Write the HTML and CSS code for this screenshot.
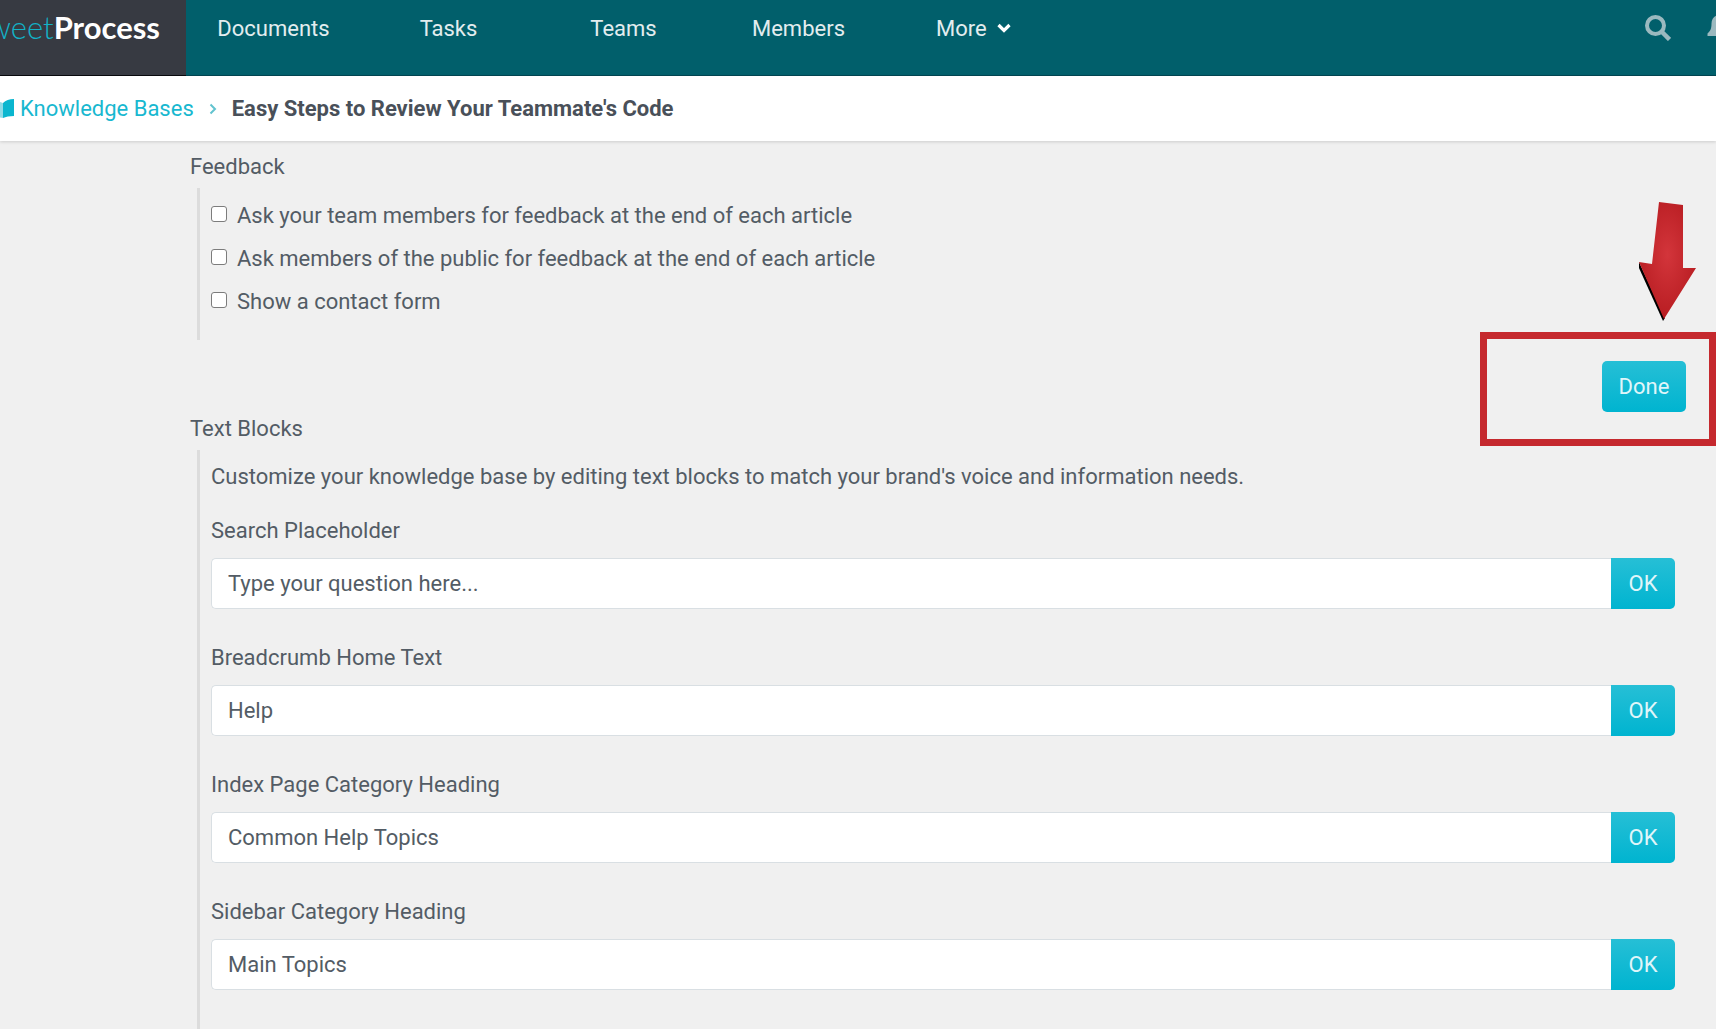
FILE: index.html
```html
<!DOCTYPE html>
<html lang="en">
<head>
<meta charset="utf-8">
<title>Easy Steps to Review Your Teammate's Code - SweetProcess</title>
<link rel="stylesheet" href="styles.css">
</head>
<body>
<div class="page">
  <header class="topbar">
    <a class="logo" href="#"><span class="logo-light">Sweet</span><span class="logo-bold">Process</span></a>
    <nav class="nav">
      <a href="#">Documents</a>
      <a href="#">Tasks</a>
      <a href="#">Teams</a>
      <a href="#">Members</a>
      <a href="#">More
        <svg class="chevron" viewBox="0 0 14 10" aria-hidden="true"><path d="M1.500 2L7 7.500 12.500 2" fill="none" stroke="#fff" stroke-width="3.200"/></svg>
      </a>
    </nav>
    <div class="tools">
      <button type="button" class="icon-button" aria-label="Search">
        <svg width="26" height="27" viewBox="0 0 26 27"><circle cx="10.500" cy="11.500" r="8.500" fill="none" stroke="#9bb9bf" stroke-width="4"/><path d="M17 18l7.500 7.500" stroke="#9bb9bf" stroke-width="4.500"/></svg>
      </button>
      <button type="button" class="icon-button" aria-label="Notifications">
        <svg width="26" height="27" viewBox="0 0 26 27"><path d="M13 1c-5 0-8.500 3.500-8.500 8.500 0 5-1 7.500-4 10V22h25v-2.500c-3-2.500-4-5-4-10C21.500 4.500 18 1 13 1zM9 23h8a4 4 0 0 1-8 0z" fill="#9bb9bf"/></svg>
      </button>
    </div>
  </header>

  <nav class="breadcrumb" aria-label="Breadcrumb">
    <a class="crumb-link" href="#">
      <svg class="book" width="30" height="20" viewBox="0 0 30 20" aria-hidden="true"><path d="M0 1q8-2 10 2v16q-4-3-10-2z" fill="#0ab6cf"/><path d="M10 3q5-1 9 1v15q-4-1-9 0z" fill="#8fdbe7"/><path d="M19 4q4-4 11-4v17q-7 0-11 2z" fill="#0ab6cf"/></svg>
      Knowledge Bases
    </a>
    <svg class="separator" width="8" height="12" viewBox="0 0 8 12" aria-hidden="true"><path d="M1.500 1.500L6 6l-4.500 4.500" fill="none" stroke="#62c3cf" stroke-width="2"/></svg>
    <span class="crumb-current">Easy Steps to Review Your Teammate's Code</span>
  </nav>

  <main class="content">
    <section>
      <h2 class="section-title">Feedback</h2>
      <div class="group checks">
        <label class="check"><input type="checkbox">Ask your team members for feedback at the end of each article</label>
        <label class="check"><input type="checkbox">Ask members of the public for feedback at the end of each article</label>
        <label class="check"><input type="checkbox">Show a contact form</label>
      </div>
    </section>

    <div class="actions">
      <button type="button" class="button done">Done</button>
      <div class="highlight">
        <svg class="arrow" width="58" height="120" viewBox="0 0 58 120" aria-hidden="true">
          <defs><radialGradient id="red" cx="0.500" cy="0.450" r="0.550"><stop offset="0" stop-color="#d3353b"/><stop offset="1" stop-color="#b81d22"/></radialGradient></defs>
          <path d="M0 60v6l24 53 2-3z" fill="#000"/>
          <path d="M20 0l24 3v63h13L25 117 0 60l13 2z" fill="url(#red)"/>
        </svg>
      </div>
    </div>

    <section>
      <h2 class="section-title">Text Blocks</h2>
      <div class="group blocks">
        <p class="intro">Customize your knowledge base by editing text blocks to match your brand's voice and information needs.</p>
        <form class="field">
          <label for="search-text">Search Placeholder</label>
          <div class="field-row"><input id="search-text" type="text" value="Type your question here..."><button type="button" class="button">OK</button></div>
        </form>
        <form class="field">
          <label for="home-text">Breadcrumb Home Text</label>
          <div class="field-row"><input id="home-text" type="text" value="Help"><button type="button" class="button">OK</button></div>
        </form>
        <form class="field">
          <label for="index-heading">Index Page Category Heading</label>
          <div class="field-row"><input id="index-heading" type="text" value="Common Help Topics"><button type="button" class="button">OK</button></div>
        </form>
        <form class="field">
          <label for="sidebar-heading">Sidebar Category Heading</label>
          <div class="field-row"><input id="sidebar-heading" type="text" value="Main Topics"><button type="button" class="button">OK</button></div>
        </form>
      </div>
    </section>
  </main>
</div>
</body>
</html>
```
FILE: styles.css
```css
* {
  box-sizing: border-box;
}

body {
  margin: 0;
  background: #fff;
  color: #535c65;
  font: 22px/24px Roboto, sans-serif;
}

a {
  color: inherit;
  text-decoration: none;
}

.page {
  margin-right: 2px;
  overflow: hidden;
  background: #f0f0f0;
}

/* Top bar */
.topbar {
  display: flex;
  height: 76px;
  background: #015f6b;
  border-bottom: 1px solid #024652;
}

.logo {
  display: flex;
  flex: none;
  justify-content: flex-end;
  width: 186px;
  height: 76px;
  padding: 9px 26px 0 0;
  overflow: hidden;
  background: #373a42;
  border-bottom: 1px solid #08090d;
  font: 31px/36px Lato, sans-serif;
}

.logo-light {
  color: #12b2c6;
  font-weight: 300;
}

.logo-bold {
  color: #fff;
  font-weight: 700;
}

.nav {
  display: grid;
  grid-template-columns: repeat(5, 175px);
  padding-top: 17px;
  color: #e3edef;
  text-align: center;
}

.chevron {
  width: 14px;
  height: 10px;
  margin-left: 5px;
  vertical-align: 3px;
}

.tools {
  display: flex;
  flex: none;
  align-items: flex-start;
  gap: 36px;
  margin: 14px -17px 0 auto;
}

.icon-button {
  display: flex;
  padding: 0;
  border: 0;
  background: none;
}

/* Breadcrumb */
.breadcrumb {
  display: flex;
  align-items: center;
  gap: 15px;
  height: 65px;
  background: #fff;
  box-shadow: 0 1px 3px #00000026;
}

.crumb-link {
  display: flex;
  align-items: center;
  gap: 6px;
  margin-left: -16px;
  color: #18b8d0;
}

.crumb-current {
  color: #495059;
  font-weight: 700;
}

/* Settings */
.content {
  padding: 14px 41px 0 190px;
}

.section-title {
  margin: 0;
  font-size: 22px;
  font-weight: 400;
  line-height: 24px;
}

.group {
  margin: 9px 0 0 7px;
  padding-left: 11px;
  border-left: 3px solid #dcdcdc;
}

.checks {
  display: grid;
  gap: 19px;
  padding-top: 16px;
  padding-bottom: 26px;
}

.check {
  display: flex;
  align-items: flex-start;
  gap: 10px;
}

.check input {
  appearance: none;
  width: 16px;
  height: 16px;
  margin: 2px 0 0;
  border: 1px solid #7c7c7c;
  border-radius: 3px;
  background: #fff;
}

.actions {
  position: relative;
  display: flex;
  justify-content: flex-end;
  margin: 21px -11px 0 0;
}

.button {
  width: 64px;
  height: 51px;
  padding: 0;
  border: 0;
  border-radius: 0 5px 5px 0;
  background: linear-gradient(#26bfd6, #00b4d0);
  color: #e0f6fa;
  font: 22px/24px Roboto, sans-serif;
}

.done {
  width: 84px;
  border-radius: 5px;
}

/* Callout drawn over the Done button */
.highlight {
  position: absolute;
  top: -29px;
  right: -30px;
  width: 236px;
  height: 114px;
  border: 7px solid #c5292e;
  pointer-events: none;
}

.arrow {
  position: absolute;
  right: 12px;
  bottom: 117px;
}

.actions + section {
  margin-top: 5px;
}

.blocks {
  padding-top: 15px;
  padding-bottom: 39px;
}

.intro {
  margin: 0 0 30px;
}

.field + .field {
  margin-top: 37px;
}

.field label {
  display: block;
  margin-bottom: 15px;
}

.field-row {
  display: flex;
}

.field-row input {
  flex: 1;
  min-width: 0;
  height: 51px;
  padding: 0 16px;
  border: 1px solid #d9dfe3;
  border-right: 0;
  border-radius: 5px 0 0 5px;
  background: #fff;
  color: #535c65;
  font: 22px/24px Roboto, sans-serif;
}
```
